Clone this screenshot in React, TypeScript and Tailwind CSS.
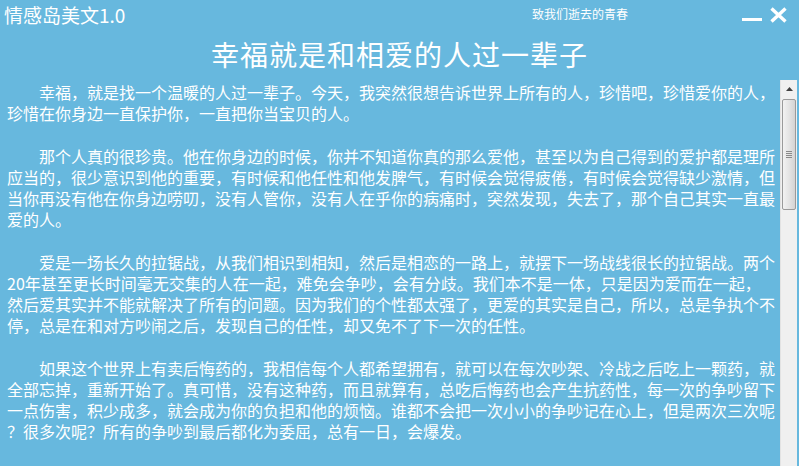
import React from 'react';

// 情感岛美文 reader window: title bar, article heading, scrolling text body

const paragraphs: string[][] = [
  [
    '　　幸福，就是找一个温暖的人过一辈子。今天，我突然很想告诉世界上所有的人，珍惜吧，珍惜爱你的人，',
    '珍惜在你身边一直保护你，一直把你当宝贝的人。',
  ],
  [
    '　　那个人真的很珍贵。他在你身边的时候，你并不知道你真的那么爱他，甚至以为自己得到的爱护都是理所',
    '应当的，很少意识到他的重要，有时候和他任性和他发脾气，有时候会觉得疲倦，有时候会觉得缺少激情，但',
    '当你再没有他在你身边唠叨，没有人管你，没有人在乎你的病痛时，突然发现，失去了，那个自己其实一直最',
    '爱的人。',
  ],
  [
    '　　爱是一场长久的拉锯战，从我们相识到相知，然后是相恋的一路上，就摆下一场战线很长的拉锯战。两个',
    '20年甚至更长时间毫无交集的人在一起，难免会争吵，会有分歧。我们本不是一体，只是因为爱而在一起，',
    '然后爱其实并不能就解决了所有的问题。因为我们的个性都太强了，更爱的其实是自己，所以，总是争执个不',
    '停，总是在和对方吵闹之后，发现自己的任性，却又免不了下一次的任性。',
  ],
  [
    '　　如果这个世界上有卖后悔药的，我相信每个人都希望拥有，就可以在每次吵架、冷战之后吃上一颗药，就',
    '全部忘掉，重新开始了。真可惜，没有这种药，而且就算有，总吃后悔药也会产生抗药性，每一次的争吵留下',
    '一点伤害，积少成多，就会成为你的负担和他的烦恼。谁都不会把一次小小的争吵记在心上，但是两次三次呢',
    '？很多次呢？所有的争吵到最后都化为委屈，总有一日，会爆发。',
  ],
  [
    '　　我们每个人都爱过，我相信都是很认真的，也许有的失去了很多，但只要念想起，还是会隐隐的作痛吧。',
  ],
];

function Scrollbar() {
  return (
    <div className="w-[17px] h-full bg-[#f0f0f0] border-l border-[#e3e3e3] flex flex-col">
      {/* up arrow */}
      <div className="h-[17px] flex items-center justify-center">
        <svg width="7" height="4" viewBox="0 0 7 4">
          <path d="M0 4 L3.5 0 L7 4 Z" fill="#404040" />
        </svg>
      </div>
      {/* thumb */}
      <div className="mt-[2px] mx-[1px] h-[111px] rounded-[2px] border border-[#9a9a9a] bg-gradient-to-r from-[#f2f2f2] via-[#e4e4e4] to-[#d4d4d4] flex flex-col items-center justify-center gap-[1px]">
        <div className="w-[6px] h-[1px] bg-[#8a8a8a]" />
        <div className="w-[6px] h-[1px] bg-[#8a8a8a]" />
        <div className="w-[6px] h-[1px] bg-[#8a8a8a]" />
        <div className="w-[6px] h-[1px] bg-[#8a8a8a]" />
      </div>
    </div>
  );
}

export default function App() {
  return (
    <div
      className="w-[799px] h-[466px] bg-[#67b8de] text-white overflow-hidden flex flex-col"
      style={{ fontFamily: '"Noto Sans CJK SC", "Noto Sans", sans-serif' }}
    >
      {/* Title bar */}
      <div className="h-[28px] flex items-center pl-[4px] shrink-0">
        <span className="text-[19px] leading-none">情感岛美文1.0</span>
        <div className="flex-1" />
        <span className="text-[12px] leading-none">致我们逝去的青春</span>
        <div className="w-[114px]" />
        <div className="flex items-end gap-[8px] mr-[12px] pt-[2px]">
          <div className="w-[20px] h-[3px] bg-white mb-[2px]" />
          <svg width="17" height="16" viewBox="0 0 17 16">
            <path d="M1.5 1.5 L15.5 14.5 M15.5 1.5 L1.5 14.5" stroke="white" strokeWidth="3.4" />
          </svg>
        </div>
      </div>

      {/* Heading */}
      <div className="h-[52px] flex items-center justify-center shrink-0">
        <h1 className="text-[28px] leading-none tracking-[1px]">幸福就是和相爱的人过一辈子</h1>
      </div>

      {/* Body */}
      <div className="flex-1 flex min-h-0">
        <div className="flex-1 pl-[7px] pt-[2px] text-[16px] leading-[21.2px] whitespace-nowrap overflow-hidden">
          {paragraphs.map((lines, i) => (
            <div key={i} className="mb-[21.2px]">
              {lines.map((line, j) => (
                <div key={j}>{line}</div>
              ))}
            </div>
          ))}
        </div>
        <div className="mr-[2px] h-full">
          <Scrollbar />
        </div>
      </div>
    </div>
  );
}
